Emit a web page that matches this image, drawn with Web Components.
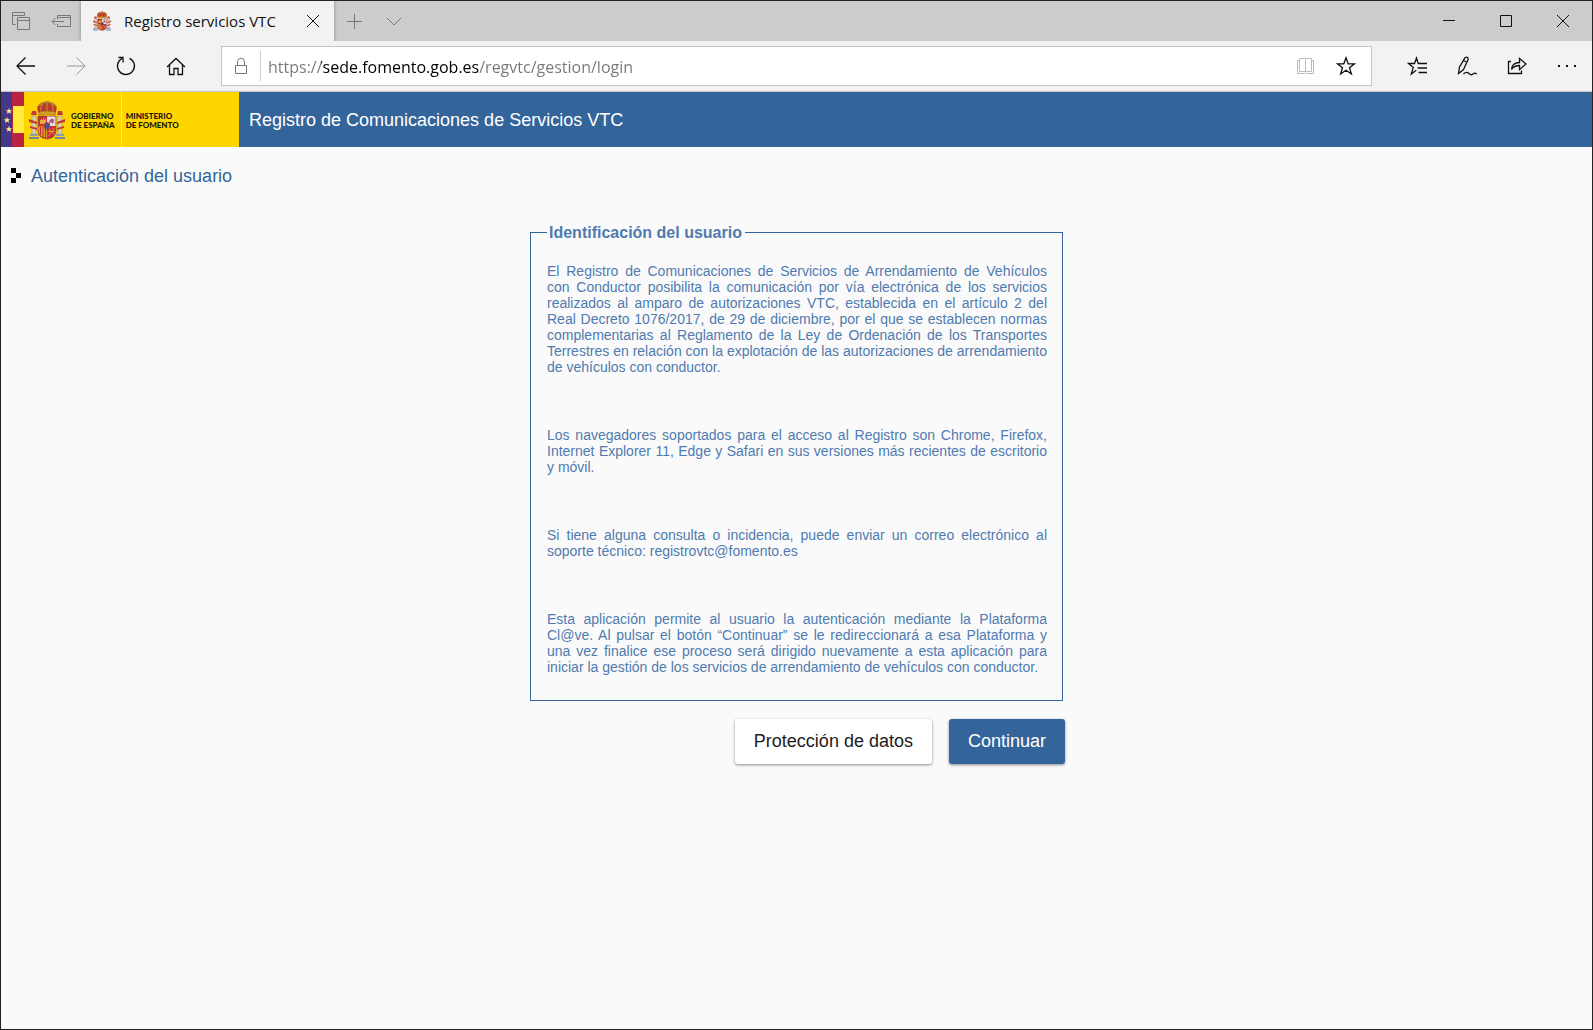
<!DOCTYPE html>
<html lang="es">
<head>
<meta charset="utf-8">
<title>Registro servicios VTC</title>
<style>
html, body {
    margin: 0;
    height: 100%;
}
body {
    font-family: "Liberation Sans", Arial, sans-serif;
    background: #fafafa;
}
</style>
</head>
<body>
<browser-window>
    <tab-strip slot="tabs">Registro servicios VTC</tab-strip>
    <address-bar slot="toolbar" url="https://sede.fomento.gob.es/regvtc/gestion/login"></address-bar>
    <site-header>Registro de Comunicaciones de Servicios VTC</site-header>
    <page-heading>Autenticación del usuario</page-heading>
    <login-panel>
        <span slot="legend">Identificación del usuario</span>
        <p>El Registro de Comunicaciones de Servicios de Arrendamiento de Vehículos con Conductor posibilita la comunicación por vía electrónica de los servicios realizados al amparo de autorizaciones VTC, establecida en el artículo 2 del Real Decreto 1076/2017, de 29 de diciembre, por el que se establecen normas complementarias al Reglamento de la Ley de Ordenación de los Transportes Terrestres en relación con la explotación de las autorizaciones de arrendamiento de vehículos con conductor.</p>
        <p>Los navegadores soportados para el acceso al Registro son Chrome, Firefox, Internet Explorer 11, Edge y Safari en sus versiones más recientes de escritorio y móvil.</p>
        <p>Si tiene alguna consulta o incidencia, puede enviar un correo electrónico al soporte técnico: registrovtc@fomento.es</p>
        <p>Esta aplicación permite al usuario la autenticación mediante la Plataforma Cl@ve. Al pulsar el botón “Continuar” se le redireccionará a esa Plataforma y una vez finalice ese proceso será dirigido nuevamente a esta aplicación para iniciar la gestión de los servicios de arrendamiento de vehículos con conductor.</p>
        <raised-button slot="actions">Protección de datos</raised-button>
        <raised-button slot="actions" primary>Continuar</raised-button>
    </login-panel>
</browser-window>

<script>
"use strict";

// line icons, drawn in a 20x20 box
const ICONS = {
    tabs: '<path d="M4.5 13.5h-3v-12h12v3M1.5 4.5h12M6.5 6.5h12v12h-12zM6.5 9.5h12"/>',
    aside: '<path d="M6.5 8V4.5h13v11h-13V13M6.5 6.5h13M1 10.5h12M4.5 7L1 10.5 4.5 14"/>',
    close: '<path d="M4 4l12 12M16 4L4 16"/>',
    plus: '<path d="M10.5 3v15M3 10.5h15"/>',
    chevron: '<path d="M3 7l7 7 7-7"/>',
    minimize: '<path d="M4 9.5h12"/>',
    maximize: '<path d="M4.5 4.5h11v11h-11z"/>',
    back: '<path d="M1 10h18M9.5 1.5L1 10l8.5 8.5"/>',
    forward: '<path d="M1 10h18M10.5 1.5L19 10l-8.5 8.5"/>',
    refresh: '<path d="M13.5 2.3A8.5 8.5 0 1 1 6 2.5M2.5 1.5H7v5"/>',
    home: '<path d="M1 11L10 2.5 19 11M3.5 9v9.5H8v-6h4v6h4.5V9"/>',
    lock: '<path d="M4.5 9.5h11v8h-11zM6.5 9.5V6a3.5 3.8 0 0 1 7 0v3.5"/>',
    book: '<path d="M9.5 15.5v-12M3.5 2.5h12v13h-12zM3.5 4.5h-2v13h7l1-1 1 1h7v-13h-2"/>',
    star: '<path d="M10 1.8l2.2 6h6.3l-5 3.9 1.9 6.3-5.4-3.8L4.600 18l1.9-6.3-5-3.9h6.3z"/>',
    favorites: '<path d="M12.5 7.500h-1.2L9.5 2l-2 5.500h-6l4.800 4-2 6.500 5-3.700M12 7.500h8M10.500 12h9.500M11.500 16.500h8.500"/>',
    pen: '<path d="M1.5 17.5L2.5 11 8 1.800q3-1.800 3.200 1.500L6.500 13.500zM6.500 4.500l3.800 2M6.500 18c2-2 4-2 5.500-.5s2.500 2 4 .5 2.500-1 4 0"/>',
    share: '<path d="M4 5.500H1.500v12h13v-3M4.500 13.500c.5-5 3.500-7 8-7V2.500L19 8l-6.500 5.500v-4c-4 0-6 1-8 4z"/>',
    more: '<path d="M1 9h2v2H1zM9 9h2v2H9zM17 9h2v2h-2z" fill="currentColor" stroke="none"/>'
};

// pillars, crown and quartered shield, used for the favicon and the logo
const COAT = `<svg viewBox="0 0 36 40" aria-hidden="true">
    <g fill="#d9d0b4" stroke="#9b8a58" stroke-width=".5"><path d="M3 16h4v18H3zM29 16h4v18h-4z"/></g>
    <g fill="#c33a37"><path d="M3 11h4l1 4H2zM29 11h4l1 4h-6zM0 19l8 3v2l-8-2zM28 22l8-3v3l-8 2zM1 26l7 2v2l-7-2zM28 28l7-2v2l-7 2z"/></g>
    <g fill="#8f9aa8"><path d="M1 34h8v2H1zM27 34h8v2h-8z"/></g>
    <g fill="#6f87a8"><path d="M0 37h10v2H0zM26 37h10v2H26z"/></g>
    <path d="M10 14C5 5 12 1 18 3c6-2 13 2 8 11z" fill="#c0392f"/>
    <path d="M9 6q9-8 18 0M13 14q-3-7 1-10M18 14V1M23 14q3-7-1-10M16 1.5h4" fill="none" stroke="#b58a2a" stroke-width="1.2"/>
    <path d="M10 12q8-2 16 0v3q-8-2-16 0z" fill="#d6a22e" stroke="#8e5a1d" stroke-width=".5"/>
    <path d="M9 16h18v15q0 7-9 8-9-1-9-8z" fill="#c8323a" stroke="#8c5b2a" stroke-width=".8"/>
    <path d="M18 16.5h8.5V26H18z" fill="#ecdde0"/>
    <path d="M9.5 26.5H18V38q-8-1-8.5-7z" fill="#e1a532"/>
    <path d="M11.5 27v8M14 27v10M16.5 27v11" stroke="#bf2f2f" stroke-width="1.1"/>
    <path d="M11 24v-4h1v-1h1v1h1v-2h1v2h1v-1h1v5z" fill="#e0af3c"/>
    <path d="M20 24q0-4 2-5t3 1l-1 4-2-2z" fill="#a8527e"/>
    <path d="M19.5 28l6 7M25.5 28l-6 8M19 31.5h7" stroke="#dfa43a" stroke-width=".8"/>
    <ellipse cx="18" cy="26" rx="2.8" ry="3.4" fill="#3f4f96" stroke="#c8323a"/>
</svg>`;

function icon(name) {
    return `<svg class="icon" viewBox="0 0 20 20" width="20" height="20" aria-hidden="true">${ICONS[name]}</svg>`;
}

function iconButton(name, label, cls = '') {
    return `<button type="button" class="${cls}" aria-label="${label}">${icon(name)}</button>`;
}

const BUTTON_RESET = `
button {
    display: flex;
    align-items: center;
    justify-content: center;
    flex: none;
    padding: 0;
    border: 0;
    background: none;
    color: #111;
    font: inherit;
}
svg { display: block; }
.icon {
    fill: none;
    stroke: currentColor;
    stroke-width: var(--stroke, 1);
}
`;

class BaseElement extends HTMLElement {
    constructor() {
        super();
        let tmpl = document.createElement('template');
        this.attachShadow({mode: 'open'});
        tmpl.innerHTML = this.template();
        this.shadowRoot.append(tmpl.content.cloneNode(true));
    }
}

class BrowserWindow extends BaseElement {
    template() {
        return `<style>
:host {
    display: flex;
    flex-direction: column;
    box-sizing: border-box;
    min-height: 100%;
    border: 1px solid #222;
    background: #fafafa;
}
main {
    display: flex;
    flex-direction: column;
    flex: 1;
}
</style><slot name="tabs"></slot><slot name="toolbar"></slot><main><slot></slot></main>`;
    }
}

class TabStrip extends BaseElement {
    template() {
        return `<style>${BUTTON_RESET}
:host {
    display: flex;
    height: 40px;
    background: #ccc;
    color: #111;
    font: 15px/40px "Open Sans", "Noto Sans", sans-serif;
}
button { width: 40px; }
.muted { color: #777; }
.tab {
    display: flex;
    align-items: center;
    box-sizing: border-box;
    width: 253px;
    padding: 0 1px 0 12px;
    background: #f2f2f2;
    box-shadow: 0 0 4px #888;
    clip-path: inset(0 -5px);
}
.favicon {
    width: 18px;
    margin-right: 13px;
}
.title {
    flex: 1;
    white-space: nowrap;
}
.caption {
    display: flex;
    margin-left: auto;
    padding-right: 1px;
}
.caption button { width: 57px; }
</style>
${iconButton('tabs', 'Pestañas guardadas', 'muted')}
${iconButton('aside', 'Apartar pestañas', 'muted')}
<div class="tab"><span class="favicon">${COAT}</span><span class="title"><slot></slot></span>${iconButton('close', 'Cerrar pestaña')}</div>
${iconButton('plus', 'Nueva pestaña', 'muted')}
${iconButton('chevron', 'Vistas previas', 'muted')}
<div class="caption">
${iconButton('minimize', 'Minimizar')}
${iconButton('maximize', 'Maximizar')}
${iconButton('close', 'Cerrar')}
</div>`;
    }
}

class AddressBar extends BaseElement {
    template() {
        return `<style>${BUTTON_RESET}
:host {
    display: flex;
    align-items: center;
    box-sizing: border-box;
    height: 51px;
    background: #f2f2f2;
    border-bottom: 1px solid #c4c4c4;
    --stroke: 1.3;
}
button {
    width: 50px;
    height: 50px;
}
.off {
    color: #999;
    --stroke: 1;
}
form {
    display: flex;
    align-items: center;
    flex: 1;
    box-sizing: border-box;
    height: 40px;
    margin: 0 20px;
    padding: 0 5px 0 8px;
    border: 1px solid #c4c4c4;
    background: #fff;
}
form button {
    width: 40px;
    height: 38px;
}
form .lock {
    width: 22px;
    margin-right: 8px;
    color: #777;
    --stroke: 1;
}
form .off { color: #bbb; }
input {
    flex: 1;
    min-width: 0;
    box-sizing: border-box;
    height: 30px;
    padding: 2px 0 0 7px;
    border: 0;
    border-left: 1px solid #ccc;
    outline: 0;
    font: 16px/28px "Open Sans", "Noto Sans", sans-serif;
    /* the host name is darker than the rest of the address */
    background: linear-gradient(90deg, #777 60px, #000 60px 218px, #777 218px);
    background-clip: text;
    -webkit-background-clip: text;
    -webkit-text-fill-color: transparent;
}
</style>
${iconButton('back', 'Atrás')}
${iconButton('forward', 'Adelante', 'off')}
${iconButton('refresh', 'Actualizar')}
${iconButton('home', 'Inicio')}
<form>
${iconButton('lock', 'Información del sitio', 'lock')}
<input type="text" aria-label="Dirección">
${iconButton('book', 'Vista de lectura', 'off')}
${iconButton('star', 'Agregar a favoritos')}
</form>
${iconButton('favorites', 'Favoritos')}
${iconButton('pen', 'Agregar notas')}
${iconButton('share', 'Compartir')}
${iconButton('more', 'Más opciones')}`;
    }

    connectedCallback() {
        this.shadowRoot.querySelector('input').value = this.getAttribute('url');
    }
}

class SiteHeader extends BaseElement {
    template() {
        return `<style>
:host {
    display: flex;
    height: 55px;
    background: #34659a;
    color: #fff;
    font-size: 18px;
    line-height: 56px;
}
.logo {
    display: flex;
    align-items: center;
    flex: none;
    width: 238px;
    background: #ffd500;
    color: #1b1400;
    font: 900 8px/9px Lato, sans-serif;
    white-space: nowrap;
}
.flag {
    flex: none;
    width: 23px;
    height: 55px;
}
.coat {
    width: 36px;
    margin: 0 6px 0 5px;
}
.name { padding-top: 2px; }
.ministry {
    align-self: stretch;
    display: flex;
    align-items: center;
    margin-left: 6px;
    padding-left: 4px;
    border-left: 1px solid #ffe873;
}
h1 {
    margin: 0 0 0 10px;
    font: inherit;
}
svg { display: block; }
</style>
<div class="logo">
<svg class="flag" viewBox="0 0 23 55" aria-hidden="true">
    <path d="M0 0h12v55H0z" fill="#45378a"/>
    <path d="M11 0h12v55H11z" fill="#bb2343"/>
    <path d="M12 14h11v27H12z" fill="#ffec3d"/>
    <path id="s" d="M8 16l.9 2.200h2.300l-1.800 1.500.7 2.300-2.100-1.400L5.900 22l.7-2.300-1.800-1.500h2.300z" fill="#fff08a"/>
    <use href="#s" x="-2" y="9"/>
    <use href="#s" y="18"/>
</svg>
<div class="coat">${COAT}</div>
<div class="name">GOBIERNO<br>DE ESPAÑA</div>
<div class="ministry"><div class="name">MINISTERIO<br>DE FOMENTO</div></div>
</div>
<h1><slot></slot></h1>`;
    }
}

class PageHeading extends BaseElement {
    template() {
        return `<style>
:host {
    display: flex;
    align-items: center;
    padding: 18px 10px;
    color: #34659a;
}
svg { margin-right: 10px; }
h2 {
    margin: 0;
    font-size: 18px;
    font-weight: normal;
    line-height: 22px;
}
</style>
<svg width="10" height="16" viewBox="0 0 10 16" aria-hidden="true"><path fill="#000" d="M0 0h5v5H0zM5 5h5v5H5zM0 10h5v5H0z"/></svg>
<h2><slot></slot></h2>`;
    }
}

class LoginPanel extends BaseElement {
    template() {
        return `<style>
:host {
    display: block;
    width: 533px;
    max-width: 100%;
    margin: 18px auto 0;
    color: #4f7bb0;
}
fieldset {
    margin: 0;
    padding: 21px 15px 25px 16px;
    border: 1px solid #34659a;
}
legend {
    padding: 0 3px 0 2px;
    font-size: 16px;
    font-weight: bold;
    line-height: 19px;
}
.text {
    display: grid;
    gap: 52px;
    font-size: 14px;
    line-height: 16px;
    text-align: justify;
}
::slotted(p) { margin: 0; }
.actions {
    display: flex;
    justify-content: flex-end;
    gap: 17px;
    margin: 18px -2px 0 0;
}
</style>
<fieldset>
    <legend><slot name="legend"></slot></legend>
    <div class="text"><slot></slot></div>
</fieldset>
<div class="actions"><slot name="actions"></slot></div>`;
    }
}

class RaisedButton extends BaseElement {
    template() {
        return `<style>
:host { display: block; }
button {
    height: 45px;
    padding: 0 19px;
    border: 0;
    border-radius: 3px;
    background: #fff;
    box-shadow: 0 1px 3px rgba(0, 0, 0, .45);
    color: #1c1c1c;
    font: inherit;
    font-size: 18px;
    white-space: nowrap;
}
:host([primary]) button {
    background: #34659a;
    color: #fff;
}
</style><button type="button"><slot></slot></button>`;
    }
}

window.customElements.define('browser-window', BrowserWindow);
window.customElements.define('tab-strip', TabStrip);
window.customElements.define('address-bar', AddressBar);
window.customElements.define('site-header', SiteHeader);
window.customElements.define('page-heading', PageHeading);
window.customElements.define('login-panel', LoginPanel);
window.customElements.define('raised-button', RaisedButton);
</script>
</body>
</html>
